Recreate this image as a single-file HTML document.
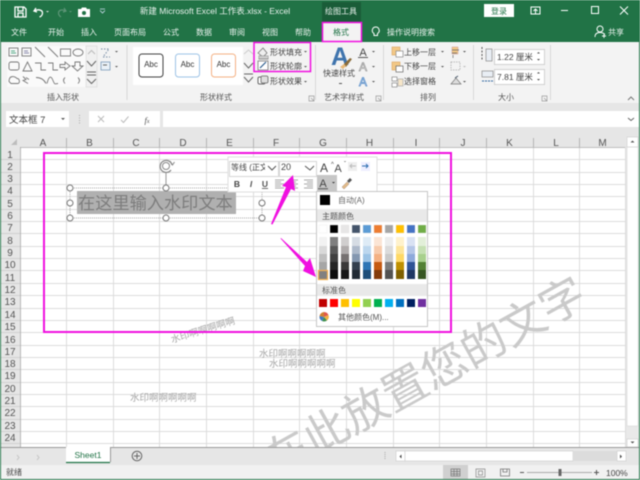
<!DOCTYPE html>
<html lang="zh"><head><meta charset="utf-8"><title>Excel</title>
<style>
html,body{margin:0;padding:0;background:#fff;width:640px;height:480px;overflow:hidden}
svg{display:block;filter:blur(.5px)}
text{font-family:"Liberation Sans","Noto Sans CJK SC",sans-serif;font-size:8px;fill:#444}
.w{fill:#e8f1ec}.m{text-anchor:middle}.h{font-size:10px;fill:#555;text-anchor:middle}
.i{fill:none;stroke:#777;stroke-width:.9}
.g{font-size:8px;fill:#555;text-anchor:middle}
.wm{fill:#a6a6a6;font-size:9.5px}
</style></head><body>
<svg width="640" height="480" viewBox="0 0 640 480" xmlns="http://www.w3.org/2000/svg">
<defs><clipPath id="c"><rect x="20" y="147" width="605" height="300"/></clipPath></defs>
<rect width="640" height="480" fill="#217346"/>
<!-- title bar -->
<rect x="322" y="2" width="39" height="20" fill="#1a5c38"/>
<path d="M15 7h9l2 2v8H15zM18 7v4h5V7M18 17v-4h5v4" fill="none" stroke="#fff" stroke-width="1.3"/>
<path d="M36 8l-2 3 3 1M34.500 11c3-2 8-1.500 8 2 0 2-1.500 3.500-3 4" fill="none" stroke="#fff" stroke-width="1.3"/>
<path d="M46 11h3l-1.500 1.500z" fill="#ddd"/>
<path d="M64 8l2 3-3 1M65.500 11c-3-2-7-1-7 2 0 2 1 3 2.500 4" fill="none" stroke="#5d9577" stroke-width="1.200"/>
<path d="M69 11h3l-1.500 1.500z" fill="#5d9577"/>
<path d="M78 9h3l1-1.500h4l1 1.500h3v8H78z" fill="#fff"/><circle cx="84" cy="13" r="2" fill="#217346"/>
<path d="M100 9h5M100 10.500l2.500 2.500 2.500-2.500" fill="none" stroke="#cde" stroke-width=".8"/>
<text x="215" y="14" class="w m" style="font-size:8.5px">新建 Microsoft Excel 工作表.xlsx  -  Excel</text>
<text x="341" y="14" class="w m">绘图工具</text>
<rect x="484" y="4" width="30" height="13" fill="#fff"/><text x="499" y="14" class="m" style="fill:#217346">登录</text>
<path d="M531 7h9v7h-9zM535.500 14V9.500M533.500 11l2-2 2 2" fill="none" stroke="#fff" stroke-width="1"/>
<rect x="561" y="10" width="7" height="1" fill="#fff"/>
<rect x="591.500" y="6.500" width="7" height="7" fill="none" stroke="#fff"/>
<path d="M620 6.500l8 8M628 6.500l-8 8" stroke="#fff" stroke-width="1"/>
<!-- tabs -->
<text x="19" y="35" class="w m">文件</text><text x="56" y="35" class="w m">开始</text><text x="89" y="35" class="w m">插入</text><text x="130" y="35" class="w m">页面布局</text><text x="171" y="35" class="w m">公式</text><text x="204" y="35" class="w m">数据</text><text x="237" y="35" class="w m">审阅</text><text x="270" y="35" class="w m">视图</text><text x="303" y="35" class="w m">帮助</text>
<rect x="322" y="22" width="40" height="20" fill="#f3f3f3"/>
<text x="341" y="35" class="m" style="fill:#217346">格式</text>
<path d="M375 27a3.500 3.500 0 0 1 2 6.500v2h-3.500v-2a3.500 3.500 0 0 1 1.500-6.500z" fill="none" stroke="#fff" transform="translate(0.500 0)"/>
<text x="411" y="35" class="w m">操作说明搜索</text>
<circle cx="600" cy="29" r="3" fill="none" stroke="#fff"/><path d="M595 37c0-3 2-4.500 5-4.500s4 1 5 2M602 36h4M604 34v4" fill="none" stroke="#fff" stroke-width=".9"/>
<text x="616" y="35" class="w m">共享</text>
<!-- ribbon -->
<rect x="1" y="42" width="638" height="61" fill="#f3f3f3"/>
<rect x="1" y="103" width="638" height="34" fill="#e6e6e6"/>
<path d="M127 45v55M315.500 45v55M383.500 45v55M473.500 45v55M550.500 45v55" stroke="#d8d8d8"/>
<!-- shape gallery -->
<rect x="7" y="46" width="79" height="41" fill="#fafafa"/>
<rect x="86" y="46" width="11" height="41" fill="#f0f0f0" stroke="#d8d8d8" stroke-width=".6"/>
<g class="i">
<rect x="9" y="48" width="9" height="8"/><path d="M11 51h4M11 53h5" stroke="#5a8"/>
<rect x="22" y="48" width="9" height="8"/><path d="M24 51h4M24 53h5" stroke="#88a"/>
<path d="M35 47l10 10M48 47l10 10"/><rect x="60.500" y="49" width="10" height="7"/><ellipse cx="78" cy="52.500" rx="5" ry="3.500"/>
<g transform="translate(0 1)"><rect x="9" y="61" width="10" height="8" rx="2"/><path d="M23 70l4.500-9 4.500 9z"/><path d="M35 62h6v7h5M48 62h5v7h5"/><path d="M60 63.500h5V61l5 4-5 4v-2.500h-5z"/><path d="M75 61h5v4h3l-5.500 5-5.500-5h3z"/></g>
<g transform="translate(0 1.500)"><path d="M9 80c0-7 6-5 8-3 3 0 3 5 1 5H11z"/><path d="M23 75l3 3-3 1 5 3M26 76l3 2"/><path d="M36 76c5 0 8 2 10 6M47 82c2-8 4-8 6-3s2 3 5 3"/><path d="M65 76c-2 2-2 4 0 6M78 76c2 2 2 4 0 6"/></g>
</g>
<path d="M88 54l3.500-3.500 3.500 3.500" fill="none" stroke="#bbb"/><path d="M87 61l4.500 5 4.500-5" fill="none" stroke="#666"/><path d="M87 72h9M87 75h9M87 79l4.500 4.500 4.500-4.500" fill="none" stroke="#666"/>
<path d="M101 49h8l-6 8h7" fill="none" stroke="#7a8fa8" stroke-dasharray="1.500 1.500"/>
<path d="M115 51h3l-1.500 1.500z" fill="#555"/>
<rect x="101" y="62" width="9" height="8" fill="#eaf1f7" stroke="#7a9ab8" stroke-width=".8"/><path d="M103 65h4" stroke="#666"/>
<path d="M115 66h3l-1.500 1.500z" fill="#555"/>
<text x="63" y="100" class="g">插入形状</text>
<!-- style gallery -->
<rect x="133" y="47" width="110" height="38" fill="#fff"/>
<rect x="139" y="54" width="24" height="23" rx="3" fill="#fff" stroke="#404040" stroke-width="1"/>
<rect x="175.500" y="54" width="24" height="23" rx="3" fill="#fff" stroke="#9dc3e6" stroke-width="1"/>
<rect x="211.500" y="54" width="24" height="23" rx="3" fill="#fff" stroke="#f4b183" stroke-width="1"/>
<text x="151" y="67" class="m" style="fill:#333">Abc</text><text x="187.500" y="67" class="m" style="fill:#333">Abc</text><text x="223.500" y="67" class="m" style="fill:#333">Abc</text>
<path d="M244 54l4.500-4 4.500 4" fill="none" stroke="#ccc"/><path d="M244 63l4.500 5 4.500-5" fill="none" stroke="#666"/><path d="M244 74h9M244 77l4.500 5 4.500-5" fill="none" stroke="#666"/>
<path d="M258 53l5-5 4 5-4 4zM259 56h9v3h-9z" fill="#eee" stroke="#777" stroke-width=".8"/><rect x="259" y="56" width="9" height="2.500" fill="#ccc"/>
<rect x="258" y="61" width="10" height="9" fill="#fff" stroke="#777" stroke-width=".8"/><path d="M260 68l6-6" stroke="#2f5f8f" stroke-width="1.200"/>
<rect x="258" y="77" width="7" height="7" rx="1.500" fill="#fff" stroke="#666"/><rect x="261" y="76" width="7" height="7" rx="1.500" fill="#ddd" stroke="#666" stroke-width=".8"/>
<text x="270" y="55">形状填充</text><text x="270" y="69">形状轮廓</text><text x="270" y="84">形状效果</text>
<path d="M304 51h3l-1.500 1.500zM304 66h3l-1.500 1.500zM304 81h3l-1.500 1.500z" fill="#555"/>
<text x="216" y="100" class="g">形状样式</text>
<path d="M309 96h5v5h-5zM311 98l3 3M314 99v2h-2" fill="none" stroke="#999" stroke-width=".7"/>
<!-- wordart -->
<text x="331" y="65" style="font-size:25px;fill:#3f74ad;font-weight:bold">A</text>
<path d="M343 65l7-7 2 1-6 8z" fill="#8a6d3b"/><path d="M340 67l4-3 2 2-3 3z" fill="#e8b977"/>
<text x="339" y="76" class="m">快速样式</text><rect x="339" y="83" width="3" height="1" fill="#555"/>
<text x="363" y="56" class="m" style="font-size:11px;fill:#444">A</text><rect x="358" y="57" width="10" height="1" fill="#555"/>
<text x="363" y="71" class="m" style="font-size:12px;fill:#fff;stroke:#888;stroke-width:.6">A</text>
<text x="363" y="86" class="m" style="font-size:12px;fill:#dbe8f6;stroke:#5b8fc9;stroke-width:.7">A</text>
<path d="M372 51h3l-1.500 1.500zM372 66h3l-1.500 1.500zM372 81h3l-1.500 1.500z" fill="#555"/>
<text x="344" y="100" class="g">艺术字样式</text>
<path d="M376 96h5v5h-5zM378 98l3 3M381 99v2h-2" fill="none" stroke="#999" stroke-width=".7"/>
<!-- arrange -->
<rect x="392" y="47" width="8" height="8" fill="#f2c886" stroke="#d9a35f" stroke-width=".6"/><rect x="396" y="51" width="7" height="6" fill="#fff" stroke="#888" stroke-width=".7"/>
<rect x="392" y="62" width="8" height="8" fill="#f2c886" stroke="#d9a35f" stroke-width=".6"/><rect x="396" y="66" width="7" height="6" fill="#fff" stroke="#666" stroke-width=".7"/>
<rect x="392" y="77" width="5" height="4" fill="#fff" stroke="#888" stroke-width=".7"/><rect x="392" y="83" width="5" height="4" fill="#fff" stroke="#888" stroke-width=".7"/><rect x="398" y="79" width="5" height="7" fill="#f6e6c9" stroke="#aaa" stroke-width=".7"/>
<text x="404" y="55">上移一层</text><text x="404" y="69">下移一层</text><text x="404" y="84">选择窗格</text>
<path d="M441 51h3l-1.500 1.500zM441 66h3l-1.500 1.500z" fill="#555"/>
<path d="M452 47h6v7h-6z" fill="#f2c886" stroke="#c99" stroke-width=".5"/><path d="M452 50h7M452 53h5M453 55v3" stroke="#666" stroke-width=".7"/>
<rect x="451" y="62" width="9" height="8" fill="none" stroke="#bbb" stroke-dasharray="1.500 1"/>
<path d="M451 84l5-6 5 6z" fill="#ddd" stroke="#777" stroke-width=".7"/><path d="M455 78l3-2" stroke="#456"/>
<path d="M463 51h3l-1.500 1.500zM463 81h3l-1.500 1.500z" fill="#555"/><path d="M463 66h3l-1.500 1.500z" fill="#bbb"/>
<text x="428" y="100" class="g">排列</text>
<!-- size -->
<path d="M482 47v14" stroke="#555" stroke-dasharray="2 1.500"/><rect x="486" y="49" width="6" height="12" fill="#e9eef4" stroke="#888" stroke-width=".7"/>
<rect x="482" y="71" width="11" height="6" fill="#e9eef4" stroke="#888" stroke-width=".7"/><path d="M482 81h11" stroke="#2e66a0" stroke-dasharray="2 1"/>
<rect x="494.500" y="49.500" width="50" height="15" fill="#fff" stroke="#d0d0d0"/>
<rect x="494.500" y="69.500" width="50" height="15" fill="#fff" stroke="#d0d0d0"/>
<text x="497" y="60" style="font-size:8.5px">1.22 厘米</text><text x="497" y="80" style="font-size:8.5px">7.81 厘米</text>
<path d="M537 53.500h3l-1.500-1.500zM537 59h3l-1.500 1.500zM537 73.500h3l-1.500-1.500zM537 79h3l-1.500 1.500z" fill="#444"/>
<text x="506" y="100" class="g">大小</text>
<path d="M542 96h5v5h-5zM544 98l3 3M547 99v2h-2" fill="none" stroke="#999" stroke-width=".7"/>
<path d="M628 100l3-3 3 3" fill="none" stroke="#777"/>
<!-- formula bar -->
<rect x="6" y="111" width="63" height="16" fill="#fff"/>
<text x="9" y="123" style="font-size:9.500px;fill:#444">文本框 7</text>
<path d="M61 118h4l-2 2z" fill="#555"/>
<path d="M79.500 115v9" stroke="#aaa" stroke-dasharray="1 1.500"/>
<rect x="89" y="111" width="71" height="16" fill="#fff"/>
<path d="M98 116l6 6M104 116l-6 6" stroke="#bbb"/><path d="M121 120l2.500 2.500 5-6" fill="none" stroke="#bbb"/>
<text x="147" y="123" class="m" style="font:italic 8.500px 'Liberation Serif',serif;fill:#555">f<tspan font-size="6">x</tspan></text>
<rect x="163" y="111" width="476" height="16" fill="#fff"/>
<path d="M628 118l3 2.500 3-2.500" fill="none" stroke="#666"/>
<!-- sheet -->
<rect x="1" y="137" width="638" height="310" fill="#fff"/>
<rect x="1" y="137" width="625" height="10" fill="#e6e6e6"/>
<rect x="1" y="147" width="19" height="300" fill="#e6e6e6"/>
<path d="M17 145v-6l-6 6z" fill="#bdbdbd"/>
<path d="M20 159.500H625M20 172.500H625M20 184.500H625M20 196.500H625M20 209.500H625M20 221.500H625M20 233.500H625M20 246.500H625M20 258.500H625M20 270.500H625M20 283.500H625M20 295.500H625M20 308.500H625M20 320.500H625M20 332.500H625M20 345.500H625M20 357.500H625M20 369.500H625M20 382.500H625M20 394.500H625M20 406.500H625M20 419.500H625M20 431.500H625M20 443.500H625M66.500 147V447M113.500 147V447M159.500 147V447M206.500 147V447M253.500 147V447M299.500 147V447M346.500 147V447M393.500 147V447M439.500 147V447M486.500 147V447M533.500 147V447M579.500 147V447M625.500 147V447" stroke="#dcdcdc" fill="none"/>
<path d="M66.500 138V147M113.500 138V147M159.500 138V147M206.500 138V147M253.500 138V147M299.500 138V147M346.500 138V147M393.500 138V147M439.500 138V147M486.500 138V147M533.500 138V147M579.500 138V147M20 147.500H625M20.500 147V447" stroke="#a9a9a9" fill="none" stroke-width=".8"/>
<path d="M1 159.500H20M1 172.500H20M1 184.500H20M1 196.500H20M1 209.500H20M1 221.500H20M1 233.500H20M1 246.500H20M1 258.500H20M1 270.500H20M1 283.500H20M1 295.500H20M1 308.500H20M1 320.500H20M1 332.500H20M1 345.500H20M1 357.500H20M1 369.500H20M1 382.500H20M1 394.500H20M1 406.500H20M1 419.500H20M1 431.500H20M1 443.500H20" stroke="#cfcfcf"/>
<g>
<text x="43" y="146" class="h">A</text><text x="89.500" y="146" class="h">B</text><text x="136" y="146" class="h">C</text><text x="183" y="146" class="h">D</text><text x="229.500" y="146" class="h">E</text><text x="276" y="146" class="h">F</text><text x="323" y="146" class="h">G</text><text x="369.500" y="146" class="h">H</text><text x="416" y="146" class="h">I</text><text x="463" y="146" class="h">J</text><text x="509.500" y="146" class="h">K</text><text x="556" y="146" class="h">L</text><text x="602.500" y="146" class="h">M</text>
<text x="10" y="158" class="h">1</text><text x="10" y="170" class="h">2</text><text x="10" y="182" class="h">3</text><text x="10" y="194" class="h">4</text><text x="10" y="207" class="h">5</text><text x="10" y="219" class="h">6</text><text x="10" y="231" class="h">7</text><text x="10" y="244" class="h">8</text><text x="10" y="256" class="h">9</text><text x="10" y="268" class="h">10</text><text x="10" y="281" class="h">11</text><text x="10" y="293" class="h">12</text><text x="10" y="305" class="h">13</text><text x="10" y="318" class="h">14</text><text x="10" y="330" class="h">15</text><text x="10" y="343" class="h">16</text><text x="10" y="355" class="h">17</text><text x="10" y="367" class="h">18</text><text x="10" y="379" class="h">19</text><text x="10" y="392" class="h">20</text><text x="10" y="404" class="h">21</text><text x="10" y="416" class="h">22</text><text x="10" y="429" class="h">23</text><text x="10" y="441" class="h">24</text>
</g>
<!-- watermarks -->
<g clip-path="url(#c)">
<text x="424" y="393" class="m" transform="rotate(-29 424 376)" style="font-size:45px;fill:#cacaca">在此放置您的文字</text>
<text x="130" y="401" class="wm">水印啊啊啊啊啊</text>
<text x="259" y="357" class="wm">水印啊啊啊啊啊</text>
<text x="269" y="367" class="wm">水印啊啊啊啊啊</text>
<text x="172" y="343" class="wm" transform="rotate(-17 172 343)">水印啊啊啊啊啊</text>
</g>
<!-- selected text box -->
<path d="M70 188H262M70 218H262M70 188V218M262 188V218" fill="none" stroke="#aaa" stroke-dasharray="1 1"/>
<path d="M166 172V188" stroke="#999"/>
<rect x="77" y="191" width="159" height="23" fill="#b0b0b0"/>
<text x="78" y="209" style="font-size:17.200px;fill:#7d7d7d">在这里输入水印文本</text>
<g fill="#fff" stroke="#777" stroke-width="1"><circle cx="70" cy="188" r="3"/><circle cx="166" cy="188" r="3"/><circle cx="70" cy="203" r="3"/><circle cx="262" cy="203" r="3"/><circle cx="70" cy="218" r="3"/><circle cx="166" cy="218" r="3"/><circle cx="262" cy="218" r="3"/></g>
<path d="M172 165a6 6 0 1 0-1 5" fill="none" stroke="#888" stroke-width="1.200"/><circle cx="166" cy="166" r="3.500" fill="none" stroke="#888"/><path d="M170 161l2.500 4 2-3" fill="none" stroke="#888"/>
<!-- magenta box -->
<rect x="44" y="153" width="407" height="179" fill="none" stroke="#f010e0" stroke-width="2"/>
<!-- mini toolbar -->
<rect x="228" y="157" width="149" height="35" fill="#fff" stroke="#dedede"/>
<rect x="229.500" y="161.500" width="49" height="15" fill="#fff" stroke="#d6d6d6"/>
<rect x="279.500" y="161.500" width="37" height="15" fill="#fff" stroke="#d6d6d6"/>
<text x="231" y="170" style="font-size:8px">等线 (正文</text>
<rect x="265" y="162" width="13" height="14" fill="#fff"/>
<path d="M268 166l4 4 4-4M305 166l5 4 4-4" fill="none" stroke="#555"/>
<text x="281" y="170" style="font-size:9px">20</text>
<text x="324" y="172" class="m" style="font-size:12px">A</text><text x="331" y="166" style="font-size:6px">^</text>
<text x="338" y="172" class="m" style="font-size:11px">A</text><text x="344" y="166" style="font-size:6px">ˇ</text>
<rect x="348" y="162" width="9" height="9" fill="#eee"/><path d="M350 166h6M352 164l-2 2 2 2" fill="none" stroke="#bbb"/>
<rect x="361" y="162" width="9" height="9" fill="#eef"/><path d="M362 166h6M366 164l2 2-2 2" fill="none" stroke="#2f6fb0"/>
<text x="237" y="187" class="m" style="font-size:8.500px;font-weight:bold">B</text>
<text x="251" y="187" class="m" style="font-size:8.500px;font-style:italic;font-weight:bold;fill:#555">I</text>
<text x="265" y="187" class="m" style="font-size:8.500px;font-weight:bold;text-decoration:underline;fill:#555">U</text>
<path d="M275 180h9M275 182h6M275 184h9M275 186h6M275 188h9M289 180h9M291 182h5M289 184h9M291 186h5M289 188h9M304 180h9M307 182h6M304 184h9M307 186h6M304 188h9" stroke="#a8a8a8"/>
<rect x="317" y="175" width="20" height="16" fill="#c6c6c6"/>
<text x="323" y="187" class="m" style="font-size:11px;fill:#444">A</text><rect x="318" y="188" width="10" height="1.500" fill="#777"/>
<path d="M332 182h3l-1.500 1.500z" fill="#333"/>
<path d="M342 187l5-5 2 2-5 5z" fill="#e2bc8a" stroke="#a87" stroke-width=".5"/><path d="M347 181l3-3 2 2-3 3z" fill="#555"/>
<!-- popup -->
<rect x="316.500" y="191.500" width="111" height="135" fill="#fff" stroke="#c6c6c6"/>
<rect x="320" y="195" width="10" height="10" fill="#000"/>
<text x="338" y="203" style="fill:#666">自动(A)</text>
<rect x="317" y="209" width="110" height="13" fill="#e9e9e9"/><text x="322" y="219" style="fill:#555">主题颜色</text>
<rect x="317" y="284" width="110" height="12" fill="#e9e9e9"/><text x="322" y="293" style="fill:#555">标准色</text>
<g stroke="#e2e2e2" stroke-width=".3">
<rect x="319" y="225" width="8" height="8" fill="#fff"/><rect x="330" y="225" width="8" height="8" fill="#000"/><rect x="341" y="225" width="8" height="8" fill="#e7e6e6"/><rect x="352" y="225" width="8" height="8" fill="#44546a"/><rect x="363" y="225" width="8" height="8" fill="#5b9bd5"/><rect x="374" y="225" width="8" height="8" fill="#ed7d31"/><rect x="385" y="225" width="8" height="8" fill="#a5a5a5"/><rect x="396" y="225" width="8" height="8" fill="#ffc000"/><rect x="407" y="225" width="8" height="8" fill="#4472c4"/><rect x="418" y="225" width="8" height="8" fill="#70ad47"/>
</g>
<g>
<rect x="319" y="237" width="8" height="9" fill="#f2f2f2"/><rect x="319" y="246" width="8" height="8" fill="#d9d9d9"/><rect x="319" y="254" width="8" height="8" fill="#bfbfbf"/><rect x="319" y="262" width="8" height="8" fill="#a6a6a6"/><rect x="319" y="270" width="8" height="9" fill="#808080"/>
<rect x="330" y="237" width="8" height="9" fill="#7f7f7f"/><rect x="330" y="246" width="8" height="8" fill="#595959"/><rect x="330" y="254" width="8" height="8" fill="#404040"/><rect x="330" y="262" width="8" height="8" fill="#262626"/><rect x="330" y="270" width="8" height="9" fill="#0d0d0d"/>
<rect x="341" y="237" width="8" height="9" fill="#d0cece"/><rect x="341" y="246" width="8" height="8" fill="#afabab"/><rect x="341" y="254" width="8" height="8" fill="#767171"/><rect x="341" y="262" width="8" height="8" fill="#3a3838"/><rect x="341" y="270" width="8" height="9" fill="#171616"/>
<rect x="352" y="237" width="8" height="9" fill="#d6dce4"/><rect x="352" y="246" width="8" height="8" fill="#adb9ca"/><rect x="352" y="254" width="8" height="8" fill="#8497b0"/><rect x="352" y="262" width="8" height="8" fill="#333f4f"/><rect x="352" y="270" width="8" height="9" fill="#222b35"/>
<rect x="363" y="237" width="8" height="9" fill="#deebf6"/><rect x="363" y="246" width="8" height="8" fill="#bdd7ee"/><rect x="363" y="254" width="8" height="8" fill="#9cc3e5"/><rect x="363" y="262" width="8" height="8" fill="#2e75b5"/><rect x="363" y="270" width="8" height="9" fill="#1e4e79"/>
<rect x="374" y="237" width="8" height="9" fill="#fbe5d5"/><rect x="374" y="246" width="8" height="8" fill="#f7cbac"/><rect x="374" y="254" width="8" height="8" fill="#f4b183"/><rect x="374" y="262" width="8" height="8" fill="#c55a11"/><rect x="374" y="270" width="8" height="9" fill="#843c0b"/>
<rect x="385" y="237" width="8" height="9" fill="#ededed"/><rect x="385" y="246" width="8" height="8" fill="#dbdbdb"/><rect x="385" y="254" width="8" height="8" fill="#c9c9c9"/><rect x="385" y="262" width="8" height="8" fill="#7b7b7b"/><rect x="385" y="270" width="8" height="9" fill="#525252"/>
<rect x="396" y="237" width="8" height="9" fill="#fff2cc"/><rect x="396" y="246" width="8" height="8" fill="#fee599"/><rect x="396" y="254" width="8" height="8" fill="#ffd965"/><rect x="396" y="262" width="8" height="8" fill="#bf9000"/><rect x="396" y="270" width="8" height="9" fill="#7f6000"/>
<rect x="407" y="237" width="8" height="9" fill="#d9e2f3"/><rect x="407" y="246" width="8" height="8" fill="#b4c6e7"/><rect x="407" y="254" width="8" height="8" fill="#8eaadb"/><rect x="407" y="262" width="8" height="8" fill="#2f5496"/><rect x="407" y="270" width="8" height="9" fill="#1f3864"/>
<rect x="418" y="237" width="8" height="9" fill="#e2efd9"/><rect x="418" y="246" width="8" height="8" fill="#c5e0b3"/><rect x="418" y="254" width="8" height="8" fill="#a8d08d"/><rect x="418" y="262" width="8" height="8" fill="#538135"/><rect x="418" y="270" width="8" height="9" fill="#375623"/>
</g>
<rect x="318.500" y="270.500" width="9" height="9" fill="#808080" stroke="#f0b050" stroke-width="1.200"/>
<g>
<rect x="319" y="299" width="8" height="8" fill="#c00000"/><rect x="330" y="299" width="8" height="8" fill="#ff0000"/><rect x="341" y="299" width="8" height="8" fill="#ffc000"/><rect x="352" y="299" width="8" height="8" fill="#ffff00"/><rect x="363" y="299" width="8" height="8" fill="#92d050"/><rect x="374" y="299" width="8" height="8" fill="#00b050"/><rect x="385" y="299" width="8" height="8" fill="#00b0f0"/><rect x="396" y="299" width="8" height="8" fill="#0070c0"/><rect x="407" y="299" width="8" height="8" fill="#002060"/><rect x="418" y="299" width="8" height="8" fill="#7030a0"/>
</g>
<circle cx="324" cy="317" r="4.500" fill="#fff"/>
<path d="M324 317V312a5 5 0 0 1 4.500 3z" fill="#e0584a"/><path d="M324 317l4.500-2a5 5 0 0 1-1.500 5.500z" fill="#f0b040"/><path d="M324 317l3 3.500a5 5 0 0 1-5 .5z" fill="#3f8f4f"/><path d="M324 317l-2 4a5 5 0 0 1-2.500-5z" fill="#3f78c0"/><path d="M324 317l-4.500-1a5 5 0 0 1 4.500-4z" fill="#d08030"/>
<text x="338" y="320" style="fill:#555">其他颜色(M)...</text>
<!-- arrows -->
<path d="M271 224L286 187L282 186L293 175L295 191L291 189L272.500 224.500z" fill="#f010e0"/>
<path d="M281 238L307 262L310 258L316 277L303 271L305 266L280.500 238.500z" fill="#f010e0"/>
<!-- magenta ribbon boxes -->
<rect x="322.500" y="22.500" width="39" height="19" fill="none" stroke="#f010e0" stroke-width="1.500"/>
<rect x="254" y="42.500" width="56.500" height="29" fill="none" stroke="#f010e0" stroke-width="1.500"/>
<!-- v scrollbar -->
<rect x="626" y="137" width="13" height="310" fill="#e9e9e9"/>
<rect x="627" y="147" width="11" height="279" fill="#fff" stroke="#d8d8d8" stroke-width=".6"/>
<rect x="627" y="137" width="11" height="10" fill="#fff" stroke="#ccc" stroke-width=".6"/><path d="M630.500 142.500h4l-2-2z" fill="#555"/>
<rect x="627" y="439" width="11" height="8" fill="#fff" stroke="#ccc" stroke-width=".6"/><path d="M630.500 441.500h4l-2 2z" fill="#555"/>
<!-- tab bar -->
<rect x="1" y="447" width="638" height="18" fill="#e6e6e6"/>
<path d="M1 447.500H639" stroke="#999"/>
<path d="M17 455l2 2.500-2 2.500M37 455l2 2.500-2 2.500" fill="none" stroke="#c4c4c4"/>
<rect x="66" y="447" width="44" height="15" fill="#fff"/><path d="M110.500 447v15" stroke="#999"/><path d="M66 462.500H110" stroke="#217346" stroke-width="1.200"/>
<text x="88" y="458" class="m" style="font-size:8.500px;fill:#217346">Sheet1</text>
<circle cx="137" cy="456" r="4.800" fill="none" stroke="#666" stroke-width="1"/><path d="M134 456h6M137 453v6" stroke="#666"/>
<path d="M385 452v8" stroke="#aaa" stroke-dasharray="1 1"/>
<rect x="396" y="451" width="9" height="10" fill="#fff" stroke="#ccc" stroke-width=".6"/><path d="M401.500 454.500v4l-2-2z" fill="#444"/>
<rect x="405" y="451" width="168" height="10" fill="#fff" stroke="#ccc" stroke-width=".6"/>
<rect x="573" y="451" width="44" height="10" fill="#dcdcdc"/>
<rect x="617" y="451" width="9" height="10" fill="#fff" stroke="#ccc" stroke-width=".6"/><path d="M620 454.500v4l2-2z" fill="#444"/>
<!-- status bar -->
<rect x="1" y="465" width="638" height="14" fill="#f1f1f1"/>
<text x="6" y="475" style="fill:#444">就绪</text>
<rect x="443" y="465" width="25" height="14" fill="#d0d0d0"/>
<path d="M451 469h9v7h-9zM451 471.500h9M451 474h9M454 469v7M457 469v7" fill="none" stroke="#777" stroke-width=".7"/>
<path d="M476 469h9v8h-9zM478.500 471h4v4h-4z" fill="none" stroke="#888" stroke-width=".7"/>
<path d="M500.500 469h9v7h-9zM503 469v3h4v-3" fill="none" stroke="#777" stroke-width=".8"/>
<rect x="520" y="472" width="4" height="1" fill="#555"/>
<rect x="527" y="472" width="65" height="1" fill="#aaa"/>
<rect x="558.500" y="469" width="3" height="7" fill="#666"/>
<path d="M594 472.500h5M596.500 470v5" stroke="#555"/>
<text x="606" y="476" style="font-size:8.500px;fill:#444">100%</text>
</svg>
</body></html>
